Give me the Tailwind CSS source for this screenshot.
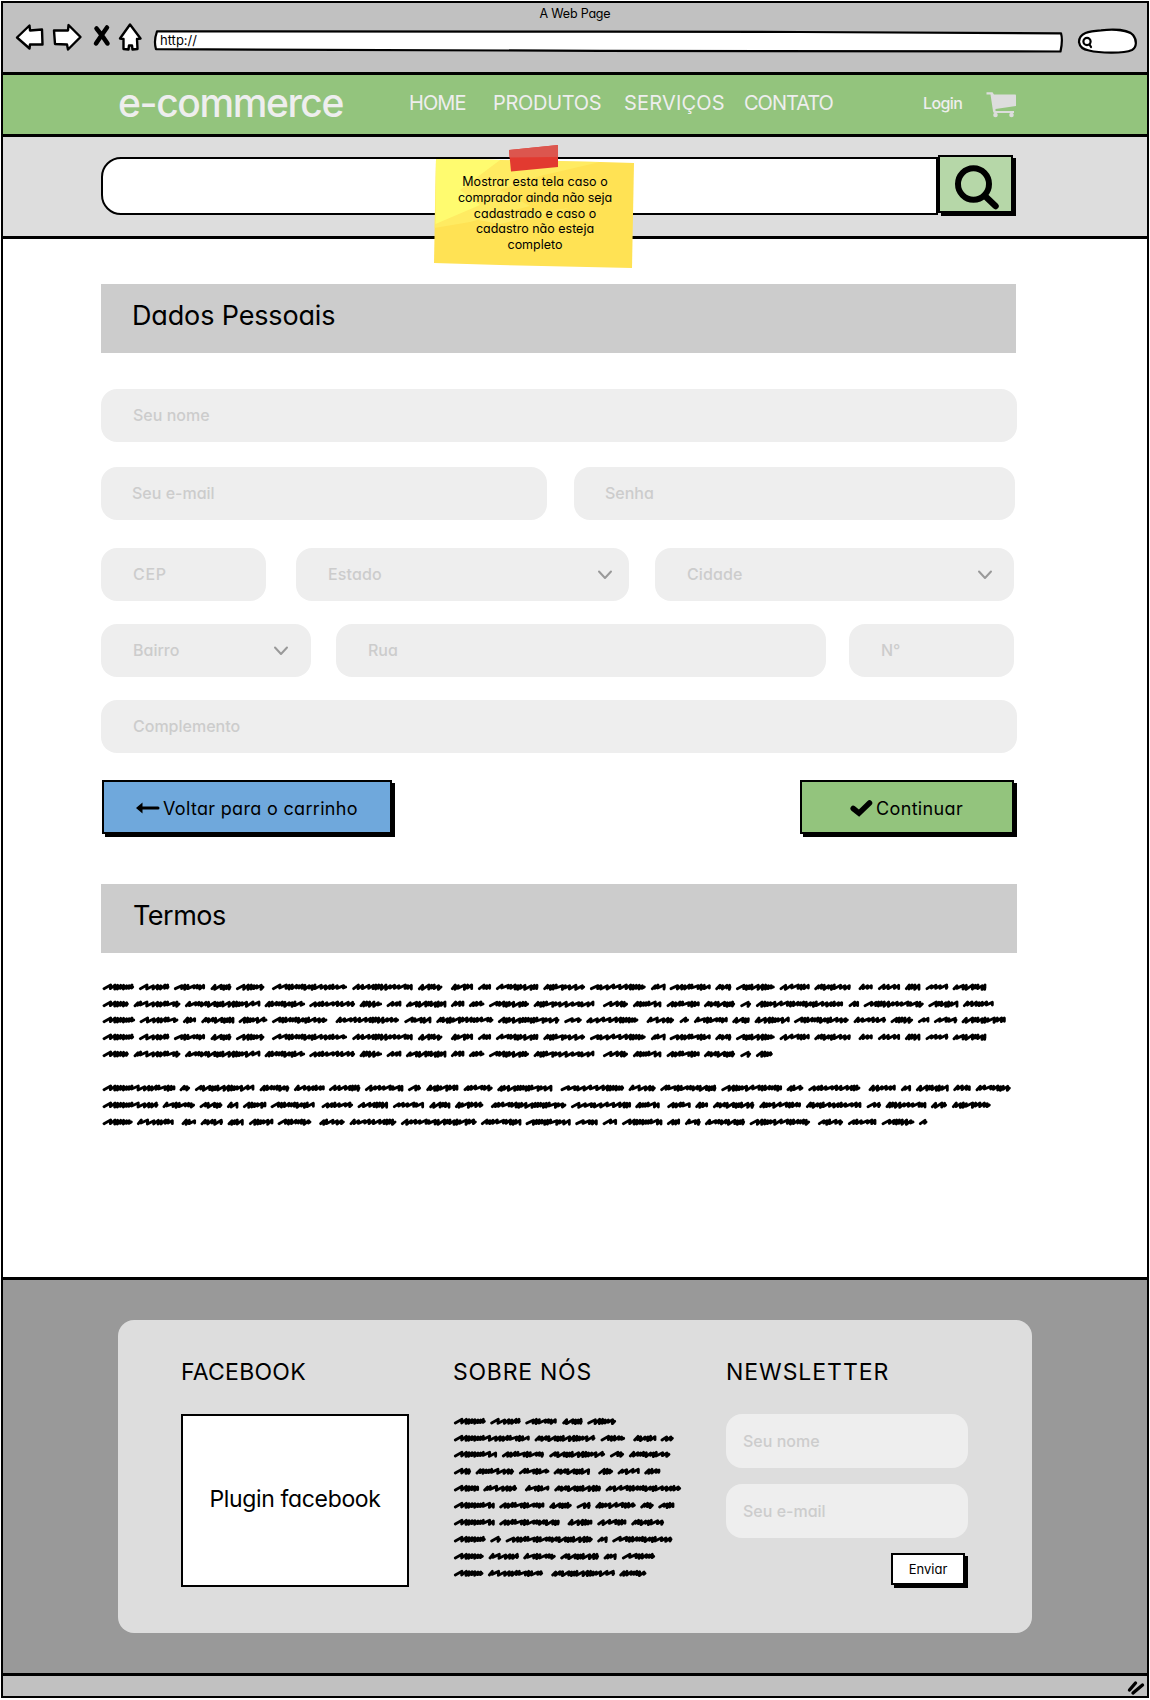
<!DOCTYPE html>
<html lang="pt-BR">
<head>
<meta charset="utf-8">
<title>e-commerce</title>
<script src="https://cdn.jsdelivr.net/npm/@tailwindcss/browser@4"></script>
</head>
<body class="h-[1700px] w-[1150px] overflow-hidden bg-white text-black antialiased [font-family:Inter,Lato,sans-serif] [font-feature-settings:'cv11']">
<div class="mx-px mt-px flex h-[1697px] flex-col border-2 border-black">

  <!-- Browser chrome -->
  <header class="flex h-[72px] shrink-0 flex-col border-b-3 border-black bg-[#c1c1c1]">
    <div class="flex h-5 items-center justify-center pt-px text-[12.500px] leading-5 tracking-[-0.200px]">A Web Page</div>
    <div class="flex h-[34px] pl-3">
      <svg class="h-[34px] w-[130px] shrink-0" viewBox="15 23 130 34" fill="#fff" stroke="#000" stroke-width="2.4" stroke-linejoin="round" stroke-linecap="round">
        <path d="M17 37.500 29.500 25.500 30 30.500 42 29.500 42.500 44.500 30 44.500 29.500 48.500Z"/>
        <path d="M80.500 37 68.500 25 68 30.500 54 30.500 55 44 67 44.500 68 49.500Z"/>
        <path d="M96.500 28.500Q102 35 107.500 43.500M107 27.500Q101 36 96 43.500" stroke-width="4.500"/>
        <path d="M130 24.500 140.500 38.500 137 39 137.500 49 132.500 49.500 132 45.500 129 45.500 128.500 49.500 123.500 49 123.500 39 120 38.500Z"/>
      </svg>
      <div class="relative ml-2 h-[34px] w-[911px] shrink-0">
        <svg class="absolute inset-0 h-[34px] w-[911px]" viewBox="153 23 911 34" fill="#fff" stroke="#000" stroke-width="2.200" stroke-linejoin="round">
          <path d="M157 31.300 600 31.700 800 32 1061 33.300Q1063 40 1060.500 51.500L600 50.800 156 49.200Q153.500 41 157 31.300Z"/>
        </svg>
        <div class="relative flex h-[34px] items-center pl-[7px] text-[13px] leading-none">http://</div>
      </div>
      <svg class="ml-[13px] h-[34px] w-[64px] shrink-0" viewBox="1076 23 64 34" fill="#fff" stroke="#000" stroke-width="2.200" stroke-linecap="round">
        <path d="M1078 42C1078 33 1088 31 1100 30.300 1114 29 1128 30 1132 35 1136 40 1136 47 1131 50 1122 54 1098 53 1088 50.500Q1079 49 1078 42Z"/>
        <circle cx="1086" cy="41.500" r="3.600"/><path d="M1088.500 44.500 1090 47"/>
      </svg>
    </div>
  </header>

  <!-- Main navigation -->
  <nav class="flex h-[62px] shrink-0 items-center border-b-3 border-black bg-[#93c47d] pb-[3px] pl-[115px] text-[#eee]">
    <span class="w-[291px] pb-[2px] text-[39px] leading-none font-medium tracking-[-1.400px]">e-commerce</span>
    <span class="w-[84px] text-[20px] tracking-[-0.900px]">HOME</span>
    <span class="w-[131px] text-[20px] tracking-[-0.300px]">PRODUTOS</span>
    <span class="w-[120px] text-[20px] tracking-[0.200px]">SERVIÇOS</span>
    <span class="w-[179px] text-[20px] tracking-[-1px]">CONTATO</span>
    <span class="w-[63px] text-[16px] font-medium tracking-[-0.600px]">Login</span>
    <svg class="mt-[3px] h-[26px] w-[31px]" viewBox="985 93 31 26" fill="#ddd">
      <path d="M985.500 93.200H991.500L993 95.500H1014.500Q1015 95.700 1015 97V107L994.500 110V112H1013V114H993.500Q992 114 992 112L989.500 95.500H985.500Z"/>
      <circle cx="994.500" cy="116" r="2.300"/><circle cx="1010.500" cy="116" r="2.300"/>
    </svg>
  </nav>

  <!-- Product search, with the annotation pinned over it -->
  <div class="relative h-[102px] shrink-0 border-b-3 border-black bg-[#ddd] pt-[18px] pl-[98px]">
    <div class="flex">
      <div class="mt-[2px] h-[58px] w-[837px] rounded-l-[20px] border-2 border-black bg-white"></div>
      <div class="h-[58px] w-[75px] border-2 border-black bg-[#b6d7a8] shadow-[3px_3px_0_#000]">
        <svg class="h-[54px] w-[71px]" viewBox="939.500 157 71 54" fill="none" stroke="#000" stroke-linecap="round"><ellipse cx="973" cy="184" rx="15.500" ry="15.800" stroke-width="6"/><path d="M984.500 196 995 206" stroke-width="6.500"/></svg>
      </div>
    </div>
    <div class="absolute top-[6px] left-[430px] h-[128px] w-[204px]">
      <svg class="absolute inset-0 h-[128px] w-[204px]" viewBox="433 143 204 128">
        <path d="M436 159Q520 160 634 163L632 268 500 265 434 263Z" fill="#ffe254"/>
        <path d="M436 159 600 162 540 176 500 190 530 206 470 222 434.500 228Z" fill="#fff06a" opacity=".65"/>
        <path d="M436 159 500 160 460 190 480 205 435.500 224Z" fill="#ffff73" opacity=".8"/>
        <path d="M478 220 570 208 500 224Z" fill="#fff37a" opacity=".6"/>
        <path d="M509 150 558 145 558 167 511 171.500Z" fill="#e23a30"/>
        <path d="M509 150 558 145 558 157 509.500 157.500Z" fill="#dc564e"/>
      </svg>
      <div class="relative flex flex-col items-center pt-[31px] text-[12.500px] leading-[15.750px]">
        <span class="tracking-[0.050px]">Mostrar esta tela caso o</span>
        <span class="tracking-[-0.090px]">comprador ainda não seja</span>
        <span>cadastrado e caso o</span>
        <span>cadastro não esteja</span>
        <span>completo</span>
      </div>
    </div>
  </div>

  <main class="h-[1038px] shrink-0 px-[98px] pt-[45px]">
    <h2 class="flex h-[69px] w-[915px] items-center bg-[#ccc] pb-[5px] pl-[31px] text-[27px] tracking-[-0.150px]">Dados Pessoais</h2>

    <div class="w-[916px] text-[16px] font-medium text-[#ccc]">
      <div class="mt-[36px] flex h-[53px] items-center rounded-[16px] bg-[#eee] pb-[2px] pl-8">Seu nome</div>
      <div class="mt-[25px] flex h-[53px]">
        <div class="flex w-[446px] items-center rounded-[16px] bg-[#eee] pb-[2px] pl-[31px]">Seu e-mail</div>
        <div class="ml-[27px] flex w-[441px] items-center rounded-[16px] bg-[#eee] pb-[2px] pl-[31px]">Senha</div>
      </div>
      <div class="mt-[28px] flex h-[53px]">
        <div class="flex w-[165px] items-center rounded-[16px] bg-[#eee] pb-[2px] pl-8 tracking-[0.700px]">CEP</div>
        <div class="ml-[30px] flex w-[333px] items-center justify-between rounded-[16px] bg-[#eee] pr-[16px] pb-[2px] pl-8"><span class="tracking-[0.150px]">Estado</span>
          <svg class="mt-[2px] h-[10px] w-4" viewBox="0 0 16 10" fill="none" stroke="#999" stroke-width="2" stroke-linecap="round" stroke-linejoin="round"><path d="M2 1.500 8 8 14 1.500"/></svg></div>
        <div class="ml-[26px] flex w-[359px] items-center justify-between rounded-[16px] bg-[#eee] pr-[21px] pb-[2px] pl-8"><span class="tracking-[0.100px]">Cidade</span>
          <svg class="mt-[2px] h-[10px] w-4" viewBox="0 0 16 10" fill="none" stroke="#999" stroke-width="2" stroke-linecap="round" stroke-linejoin="round"><path d="M2 1.500 8 8 14 1.500"/></svg></div>
      </div>
      <div class="mt-[23px] flex h-[53px]">
        <div class="flex w-[210px] items-center justify-between rounded-[16px] bg-[#eee] pr-[22px] pb-[2px] pl-8"><span>Bairro</span>
          <svg class="mt-[2px] h-[10px] w-4" viewBox="0 0 16 10" fill="none" stroke="#999" stroke-width="2" stroke-linecap="round" stroke-linejoin="round"><path d="M2 1.500 8 8 14 1.500"/></svg></div>
        <div class="ml-[25px] flex w-[490px] items-center rounded-[16px] bg-[#eee] pb-[2px] pl-8">Rua</div>
        <div class="ml-[23px] flex w-[165px] items-center rounded-[16px] bg-[#eee] pb-[2px] pl-8">N°</div>
      </div>
      <div class="mt-[23px] flex h-[53px] items-center rounded-[16px] bg-[#eee] pb-[2px] pl-8">Complemento</div>
    </div>

    <div class="mt-[27px] ml-px flex h-[54px] w-[912px] justify-between text-[18px]">
      <button class="flex w-[290px] items-center border-2 border-black bg-[#6fa8dc] pt-[2px] pl-8 shadow-[3px_3px_0_#000]">
        <svg class="mr-[3px] h-[12px] w-[24px]" viewBox="0 0 24 12"><path d="M0 6 6.500 .5V4.500H22Q23.500 4.500 23.500 6T22 7.500H6.500V11.500Z"/></svg>
        <span class="tracking-[0.320px]">Voltar para o carrinho</span></button>
      <button class="flex w-[214px] items-center border-2 border-black bg-[#93c47d] pt-[2px] pl-[48px] shadow-[3px_3px_0_#000]">
        <svg class="mr-[3px] h-[18px] w-[23px]" viewBox="0 0 23 18"><path d="M3.200 9.500 9 14.200 19.500 4" fill="none" stroke="#000" stroke-width="5.500" stroke-linecap="round"/></svg>
        <span class="tracking-[0.350px]">Continuar</span></button>
    </div>

    <h2 class="mt-[50px] flex h-[69px] w-[916px] items-center bg-[#ccc] pb-[5px] pl-[32px] text-[27px] tracking-[-0.500px]">Termos</h2>

    <svg id="terms" class="mt-[25px] h-[160px] w-[920px]" viewBox="33 -3 2760 480" fill="none" stroke="#000" stroke-width="8.500" stroke-linejoin="round" stroke-linecap="round"></svg>
  </main>

  <!-- Footer -->
  <footer class="h-[399px] shrink-0 border-y-3 border-black bg-[#999] pt-[40px] pl-[115px]">
    <div class="flex h-[313px] w-[914px] rounded-[16px] bg-[#ddd] pt-[37px] pl-[63px]">
      <div class="w-[272px]">
        <h3 class="h-[57px] pt-px text-[23px] leading-[29px] tracking-[0.250px]">FACEBOOK</h3>
        <div class="flex h-[173px] w-[228px] items-center justify-center border-2 border-black bg-white pb-[2px] text-[23px] tracking-[-0.350px]">Plugin facebook</div>
      </div>
      <div class="w-[273px]">
        <h3 class="h-[57px] pt-px text-[23px] leading-[29px] tracking-[0.750px]">SOBRE NÓS</h3>
        <svg id="about" class="h-[173px] w-[240px]" viewBox="40 -22 720 519" fill="none" stroke="#000" stroke-width="8.500" stroke-linejoin="round" stroke-linecap="round"></svg>
      </div>
      <div class="w-[242px]">
        <h3 class="h-[57px] pt-px text-[23px] leading-[29px] tracking-[0.950px]">NEWSLETTER</h3>
        <div class="flex h-[54px] items-center rounded-[16px] bg-[#eee] pl-[17px] text-[16px] font-medium text-[#ccc]">Seu nome</div>
        <div class="mt-4 flex h-[54px] items-center rounded-[16px] bg-[#eee] pl-[17px] text-[16px] font-medium text-[#ccc]">Seu e-mail</div>
        <button class="mt-[15px] mr-[3px] ml-auto flex h-[32px] w-[74px] items-center justify-center border-2 border-black bg-white pt-[2px] text-[13px] shadow-[3px_3px_0_#000]">Enviar</button>
      </div>
    </div>
  </footer>
  <div class="flex grow justify-end bg-[#c1c1c1] pt-[4px] pr-[2px]">
    <svg class="h-[16px] w-[18px]" viewBox="0 0 18 16" stroke="#000" stroke-width="3.400" stroke-linecap="round"><path d="M2.500 10 8.500 3M6 13 15.500 5"/></svg>
  </div>
</div>

<script>
// Word extents of the placeholder copy: one array per line, first item is the line's y.
var terms = [
  [24,'38-132 147-238 252-345 362-424 438-523 546-771 787-968 984-1057 1083-1149 1164-1203 1218-1345 1360-1485 1500-1667 1683-1727 1739-1862 1876-1924 1938-2054 2069-2159 2173-2282 2306-2348 2364-2430 2445-2491 2507-2575 2588-2689'],
  [75,'38-116 131-271 285-511 524-645 658-795 809-876 890-934 948-1069 1083-1123 1137-1183 1197-1317 1331-1513 1539-1614 1629-1714 1730-1829 1842-1935 1951-1983 1998-2259 2276-2307 2321-2501 2515-2605 2619-2711'],
  [123,'38-135 149-265 279-318 334-433 446-532 546-712 737-927 943-1024 1039-1210 1224-1408 1423-1475 1489-1645 1670-1752 1769-1797 1812-1913 1927-1979 1994-2099 2112-2276 2291-2388 2402-2469 2484-2518 2532-2602 2615-2747'],
  [174,'38-132 147-238 252-345 362-424 438-523 546-771 787-968 984-1057 1083-1149 1164-1203 1218-1345 1360-1485 1500-1667 1683-1727 1739-1862 1876-1924 1938-2054 2069-2159 2173-2282 2306-2348 2364-2430 2445-2491 2507-2575 2588-2689'],
  [225,'38-116 131-271 285-511 524-645 658-795 809-876 890-934 948-1069 1083-1123 1137-1183 1197-1317 1331-1513 1539-1614 1629-1714 1730-1829 1842-1935 1951-1983 1998-2048'],
  [327,'38-256 269-300 315-493 509-598 612-704 717-811 825-940 954-993 1009-1105 1121-1208 1222-1387 1412-1602 1616-1697 1711-1879 1894-2076 2090-2140 2155-2311 2336-2417 2433-2463 2478-2576 2590-2642 2657-2762'],
  [378,'38-205 218-315 329-397 411-445 459-529 542-674 695-789 803-894 909-1002 1018-1081 1095-1180 1203-1429 1443-1623 1636-1709 1732-1802 1816-1854 1869-1993 2008-2133 2148-2314 2330-2373 2387-2509 2523-2571 2586-2702'],
  [429,'38-128 141-251 275-318 332-399 413-461 477-550 563-664 688-764 779-919 933-1160 1173-1294 1307-1442 1456-1523 1538-1581 1596-1717 1731-1770 1785-1832 1845-1965 1979-2160 2184-2259 2274-2359 2375-2473 2487-2512']
];
var about = [
  [0,'43-138 152-243 257-351 368-429 443-529'],
  [51,'43-270 285-467 483-556 581-650 663-702'],
  [99,'43-172 187-313 329-496 511-553 568-692'],
  [150,'43-94 108-223 238-329 342-451 476-520 534-600 614-662'],
  [201,'43-118 131-232 256-329 344-484 498-724'],
  [252,'43-165 179-314 329-396 411-453 467-588 602-642 656-704'],
  [303,'43-165 179-360 384-458 473-560 575-673'],
  [354,'43-138 152-184 198-459 473-504 518-698'],
  [405,'43-132 147-238 251-348 362-478 492-531 547-646'],
  [456,'43-131 145-310 335-526 539-620']
];
function scribble(id, lines) {
  var d = '';
  lines.forEach(function (line) {
    var y = line[0], seed = 7;
    line[1].split(' ').forEach(function (w) {
      var p = w.split('-'), x = +p[0] + 4, end = +p[1] - 4;
      d += 'M' + x + ' ' + (y + 5);
      while (x < end - 8) {
        seed = (seed * 73 + 41) % 101;
        var step = [9, 10, 14, 20][seed % 4], up = 4 + seed % 3, down = 3 + seed % 5;
        d += 'L' + Math.min(x + step, end) + ' ' + (y - up) + 'L' + Math.min(x + step - 1, end) + ' ' + (y + down);
        x += step - 1;
      }
      d += 'L' + end + ' ' + y;
    });
  });
  document.getElementById(id).innerHTML = '<path d="' + d + '"/>';
}
scribble('terms', terms);
scribble('about', about);
</script>
</body>
</html>
